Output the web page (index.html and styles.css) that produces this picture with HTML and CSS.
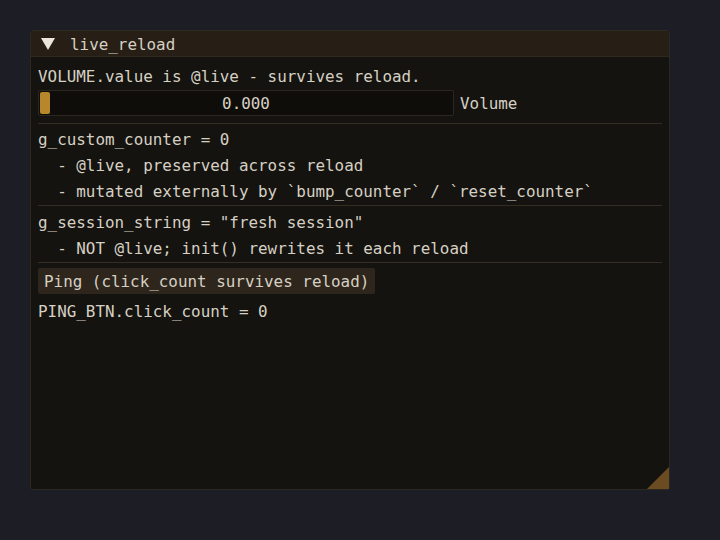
FILE: index.html
```html
<!DOCTYPE html>
<html>
<head>
<meta charset="utf-8">
<link rel="stylesheet" href="styles.css">
</head>
<body>
<div class="window">
  <div class="titlebar">
    <span class="arrow"></span>
    <span class="title">live_reload</span>
  </div>
  <div class="content">
    <div class="row first">VOLUME.value is @live - survives reload.</div>
    <div class="slider-row">
      <div class="slider">
        <span class="grab"></span>
        <span class="value">0.000</span>
      </div>
      <span class="label">Volume</span>
    </div>
    <div class="sep sep-first"></div>
    <div class="row after-first-sep">g_custom_counter = 0</div>
    <div class="row">  - @live, preserved across reload</div>
    <div class="row">  - mutated externally by `bump_counter` / `reset_counter`</div>
    <div class="sep"></div>
    <div class="row">g_session_string = "fresh session"</div>
    <div class="row">  - NOT @live; init() rewrites it each reload</div>
    <div class="sep"></div>
    <div class="button-row"><span class="button">Ping (click_count survives reload)</span></div>
    <div class="row last">PING_BTN.click_count = 0</div>
  </div>
  <span class="grip"></span>
</div>
</body>
</html>
```
FILE: styles.css
```css
* { box-sizing: border-box; }
html, body {
  margin: 0;
  padding: 0;
  width: 720px;
  height: 540px;
  background: #1d1d25;
  font-family: "DejaVu Sans Mono", "Liberation Mono", monospace;
  font-size: 15.9px;
  color: #d6d0c4;
}
body {
  padding: 30px 0 0 30px;
}
.window {
  position: relative;
  width: 640px;
  height: 460px;
  background: #15130f;
  border: 1px solid #2c2822;
  border-radius: 3px;
  display: flex;
  flex-direction: column;
}
.titlebar {
  height: 26px;
  background: #271f16;
  display: flex;
  align-items: center;
  border-bottom: 1px solid #2f281f;
  border-radius: 2px 2px 0 0;
}
.arrow {
  width: 0;
  height: 0;
  margin-left: 10px;
  border-left: 7px solid transparent;
  border-right: 7px solid transparent;
  border-top: 12px solid #ebe6dc;
  margin-top: 1px;
}
.title {
  margin-left: 15px;
  line-height: 26px;
  padding-top: 2px;
  white-space: pre;
}
.content {
  display: flex;
  flex-direction: column;
  padding: 7px 7px 0 7px;
}
.row {
  height: 22px;
  line-height: 20px;
  padding-top: 3px;
  margin-top: 4px;
  white-space: pre;
}
.row.first { margin-top: 0; }
.row.after-first-sep { margin-top: 3px; }
.row.last { margin-top: 5px; }
.slider-row {
  margin-top: 4px;
  display: flex;
  align-items: center;
  height: 26px;
}
.slider {
  position: relative;
  width: 416px;
  height: 26px;
  background: #0f0d09;
  border: 1px solid #2b261f;
  border-radius: 2px;
  display: flex;
  align-items: center;
  justify-content: center;
}
.grab {
  position: absolute;
  left: 1px;
  top: 1px;
  width: 10px;
  height: 22px;
  background: #b8862b;
  border-radius: 2px;
}
.value {
  line-height: 24px;
  padding-top: 2px;
}
.label {
  margin-left: 6px;
  line-height: 26px;
  padding-top: 2px;
}
.sep {
  height: 1px;
  background: #342d24;
  margin-top: 4px;
}
.sep.sep-first { margin-top: 7px; }
.button-row {
  margin-top: 5px;
  display: flex;
}
.button {
  height: 26px;
  line-height: 26px;
  padding: 1px 6px 0 6px;
  background: #2e261c;
  border-radius: 2px;
  white-space: pre;
}
.grip {
  position: absolute;
  right: 0;
  bottom: 0;
  width: 0;
  height: 0;
  border-left: 22px solid transparent;
  border-bottom: 22px solid #6a4b22;
}
```
